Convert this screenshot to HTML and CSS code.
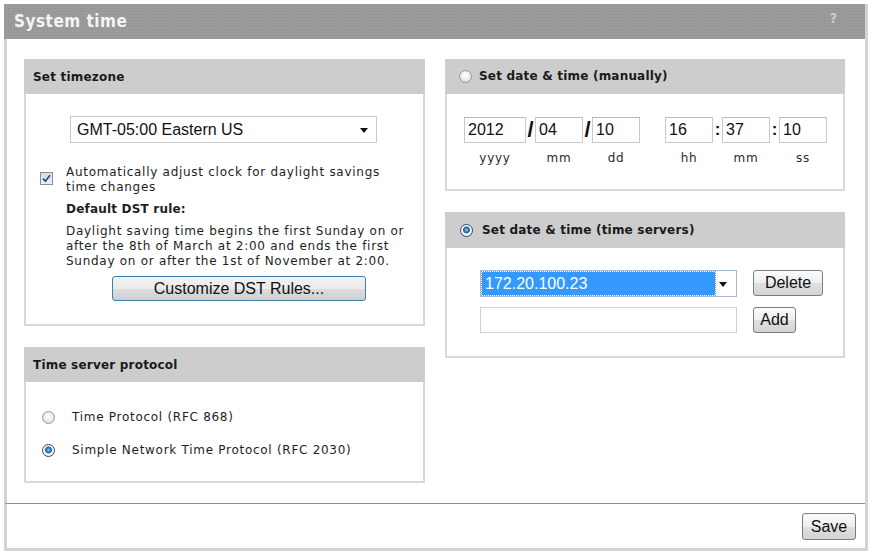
FILE: index.html
```html
<!DOCTYPE html>
<html>
<head>
<meta charset="utf-8">
<title>System time</title>
<link rel="stylesheet" href="styles.css">
</head>
<body>
<div class="frame">
  <div class="titlebar">
    <span class="title">System time</span>
    <span class="help">?</span>
  </div>
  <div class="content">
    <div class="col col-left">
      <section class="panel panel-tz">
        <div class="phead">Set timezone</div>
        <div class="pbody tz-body">
          <div class="select tz-select">
            <span class="select-text">GMT-05:00 Eastern US</span>
            <span class="arrow"></span>
          </div>
          <div class="check-row">
            <span class="checkbox">
              <svg width="9" height="9" viewBox="0 0 9 9"><path d="M1 4.6 L3.4 7.2 L8 1.2" fill="none" stroke="#2b4f8e" stroke-width="1.8"/></svg>
            </span>
            <span class="check-label">Automatically adjust clock for daylight savings time changes</span>
          </div>
          <div class="dst">
            <div class="dst-title">Default DST rule:</div>
            <p class="dst-text">Daylight saving time begins the first Sunday on or after the 8th of March at 2:00 and ends the first Sunday on or after the 1st of November at 2:00.</p>
          </div>
          <div class="btn-wrap"><button class="btn btn-blue">Customize DST Rules...</button></div>
        </div>
      </section>
      <section class="panel panel-proto">
        <div class="phead">Time server protocol</div>
        <div class="pbody proto-body">
          <div class="radio-row"><span class="radio"></span><span>Time Protocol (RFC 868)</span></div>
          <div class="radio-row"><span class="radio checked"></span><span>Simple Network Time Protocol (RFC 2030)</span></div>
        </div>
      </section>
    </div>
    <div class="col col-right">
      <section class="panel panel-manual">
        <div class="phead phead-radio manual-head"><span class="radio"></span><span>Set date &amp; time (manually)</span></div>
        <div class="pbody manual-body">
          <div class="dt-row">
            <div class="field"><input class="tinput w-year" value="2012"><span class="flabel">yyyy</span></div>
            <span class="sep sep-slash">/</span>
            <div class="field"><input class="tinput w-2" value="04"><span class="flabel">mm</span></div>
            <span class="sep sep-slash">/</span>
            <div class="field"><input class="tinput w-2" value="10"><span class="flabel">dd</span></div>
            <span class="gap"></span>
            <div class="field"><input class="tinput w-2" value="16"><span class="flabel">hh</span></div>
            <span class="sep sep-colon">:</span>
            <div class="field"><input class="tinput w-2" value="37"><span class="flabel">mm</span></div>
            <span class="sep sep-colon">:</span>
            <div class="field"><input class="tinput w-2" value="10"><span class="flabel">ss</span></div>
          </div>
        </div>
      </section>
      <section class="panel panel-servers">
        <div class="phead phead-radio servers-head"><span class="radio checked"></span><span>Set date &amp; time (time servers)</span></div>
        <div class="pbody servers-body">
          <div class="srv-row">
            <div class="select srv-select">
              <span class="hl">172.20.100.23</span>
              <span class="arrow"></span>
            </div>
            <button class="btn btn-gray btn-delete">Delete</button>
          </div>
          <div class="srv-row">
            <input class="tinput srv-input" value="">
            <button class="btn btn-gray btn-add">Add</button>
          </div>
        </div>
      </section>
    </div>
  </div>
  <div class="footer">
    <button class="btn btn-gray btn-save">Save</button>
  </div>
</div>
</body>
</html>
```

FILE: styles.css
```css
* { box-sizing: border-box; }

body {
  margin: 0;
  background: #ffffff;
  font-family: "DejaVu Sans", Verdana, sans-serif;
  font-size: 12px;
  letter-spacing: 0.72px;
  color: #1e1e1e;
}

.frame {
  margin: 4px 0 0 4px;
  width: 864px;
  border-right: 3px solid #d3d3d3;
  border-bottom: 3px solid #d3d3d3;
}

.titlebar {
  height: 35px;
  background-color: #9b9b9b;
  background-image: radial-gradient(circle, #8f8f8f 0.6px, transparent 0.9px);
  background-size: 3px 3px;
  display: flex;
  align-items: center;
  justify-content: space-between;
  padding: 0 28px 2px 10px;
}

.title {
  font-family: "DejaVu Sans Condensed", "DejaVu Sans", sans-serif;
  font-stretch: condensed;
  font-weight: bold;
  font-size: 17px;
  color: #f4f4f4;
  letter-spacing: 0.5px;
}

.help {
  font-family: "DejaVu Sans Condensed", "DejaVu Sans", sans-serif;
  font-weight: bold;
  font-size: 14px;
  letter-spacing: 0;
  color: #c9cdd3;
  margin-top: -6px;
}

.content {
  border-left: 3px solid #d3d3d3;
  height: 464px;
  padding: 20px 20px 0 17px;
  display: flex;
  gap: 20px;
}

.col {
  display: flex;
  flex-direction: column;
  gap: 21px;
}
.col-left { width: 401px; }
.col-right { width: 400px; }

.panel {
  border: 2px solid #d9d9d9;
  border-top: none;
  display: flex;
  flex-direction: column;
}
.panel-tz { height: 267px; }
.panel-proto { height: 136px; }
.panel-manual { height: 132px; }
.panel-servers { height: 146px; }

.phead {
  height: 35px;
  margin: 0 -2px;
  background: #cdcdcd;
  font-weight: bold;
  font-size: 12px;
  letter-spacing: 0.2px;
  color: #1a1a1a;
  display: flex;
  align-items: center;
  padding-left: 9px;
}
.phead-radio { gap: 7px; padding-left: 14px; }
.manual-head { padding-bottom: 1px; }
.servers-head { height: 36px; gap: 9px; padding-left: 15px; }

.pbody { flex: 1; }

/* timezone */
.tz-body { padding: 22px 0 0 14px; }

.select {
  height: 27px;
  border: 1px solid #cbcbcb;
  background: #fff;
  display: flex;
  align-items: center;
  font-family: "Liberation Sans", Arial, sans-serif;
  font-size: 16px;
  letter-spacing: 0;
  color: #111;
  position: relative;
}
.tz-select {
  width: 307px;
  margin-left: 30px;
  padding-left: 6px;
}
.arrow {
  position: absolute;
  right: 8px;
  top: 11px;
  width: 0;
  height: 0;
  border-left: 4px solid transparent;
  border-right: 4px solid transparent;
  border-top: 5px solid #111;
}

.check-row {
  margin-top: 22px;
  display: flex;
  line-height: 15px;
}
.checkbox {
  width: 13px;
  height: 13px;
  margin-top: 7px;
  flex: none;
  border: 1px solid #8e8f8f;
  background: linear-gradient(#d3dbe4, #eef2f6);
  display: flex;
  align-items: center;
  justify-content: center;
}
.check-label {
  margin-left: 13px;
  width: 340px;
}

.dst {
  margin-left: 26px;
  line-height: 15px;
}
.dst-title {
  font-weight: bold;
  letter-spacing: 0.2px;
  margin-top: 7px;
}
.dst-text {
  margin: 7px 0 0;
  width: 356px;
}

.btn-wrap {
  margin-top: 7px;
  padding-left: 72px;
}

.btn {
  font-family: "Liberation Sans", Arial, sans-serif;
  font-size: 16px;
  letter-spacing: 0;
  color: #111;
  padding: 0;
  cursor: default;
}
.btn-blue {
  width: 254px;
  height: 25px;
  border: 1px solid #3c7fb1;
  border-radius: 3px;
  background: linear-gradient(#f3f3f3 0%, #ebebeb 50%, #dddddd 51%, #cfcfcf 100%);
}
.btn-gray {
  border: 1px solid #7c7c7c;
  border-radius: 3px;
  background: linear-gradient(#fbfbfb 0%, #eeeeee 50%, #e0e0e0 51%, #d3d3d3 100%);
}

/* protocol */
.proto-body {
  padding: 28px 0 0 16px;
  display: flex;
  flex-direction: column;
  gap: 18px;
}
.radio-row {
  display: flex;
  align-items: center;
  gap: 17px;
  line-height: 15px;
  color: #1e1e1e;
}

.radio {
  width: 13px;
  height: 13px;
  flex: none;
  border-radius: 50%;
  border: 1px solid #9a9a9a;
  background: radial-gradient(circle at 50% 40%, #ffffff 0, #f0f0f0 40%, #cfcfcf 100%);
}
.radio.checked {
  border-color: #2c4a6b;
  background: radial-gradient(circle at 50% 45%, #a8dcff 0, #3d8fd6 1.5px, #1f5b9a 3px, #e6e6e6 3.8px, #ffffff 4.5px, #cdcdcd 100%);
}

/* manual */
.manual-body { padding: 23px 0 0 17px; }
.dt-row { display: flex; align-items: flex-start; }
.field {
  display: flex;
  flex-direction: column;
  align-items: center;
}
.tinput {
  height: 26px;
  border: 1px solid #c9c9c9;
  border-top-color: #b9b9b9;
  background: #fff;
  font-family: "Liberation Sans", Arial, sans-serif;
  font-size: 16px;
  letter-spacing: 0;
  color: #111;
  padding: 0 0 0 3px;
  outline: none;
}
.w-year { width: 62px; }
.w-2 { width: 48px; }
.flabel {
  margin-top: 8px;
  line-height: 15px;
  color: #2a2a2a;
}
.sep {
  font-family: "Liberation Sans", Arial, sans-serif;
  font-weight: bold;
  letter-spacing: 0;
  color: #111;
  text-align: center;
  line-height: 26px;
}
.sep-slash { width: 9px; font-size: 22px; }
.sep-colon { width: 9px; font-size: 17px; }
.gap { width: 25px; }

/* servers */
.servers-body {
  padding: 22px 0 0 33px;
  display: flex;
  flex-direction: column;
  gap: 10px;
}
.srv-row {
  display: flex;
  align-items: flex-start;
  gap: 16px;
}
.srv-select {
  width: 257px;
  border-color: #a9b9cc;
  padding-left: 1px;
}
.hl {
  width: 233px;
  height: 23px;
  background: #3399ff;
  outline: 1px dotted #c98c48;
  color: #ffffff;
  display: flex;
  align-items: center;
  padding-left: 3px;
}
.srv-select .arrow { right: 9px; }
.btn-delete { width: 70px; height: 26px; }
.srv-input { width: 257px; height: 26px; border-color: #d0d0d0; }
.btn-add { width: 43px; height: 26px; }

/* footer */
.footer {
  border-left: 3px solid #d3d3d3;
  border-top: 1px solid #8f8f8f;
  height: 45px;
  display: flex;
  justify-content: flex-end;
  align-items: flex-start;
  padding: 9px 9px 0 0;
}
.btn-save { width: 54px; height: 27px; }
```
